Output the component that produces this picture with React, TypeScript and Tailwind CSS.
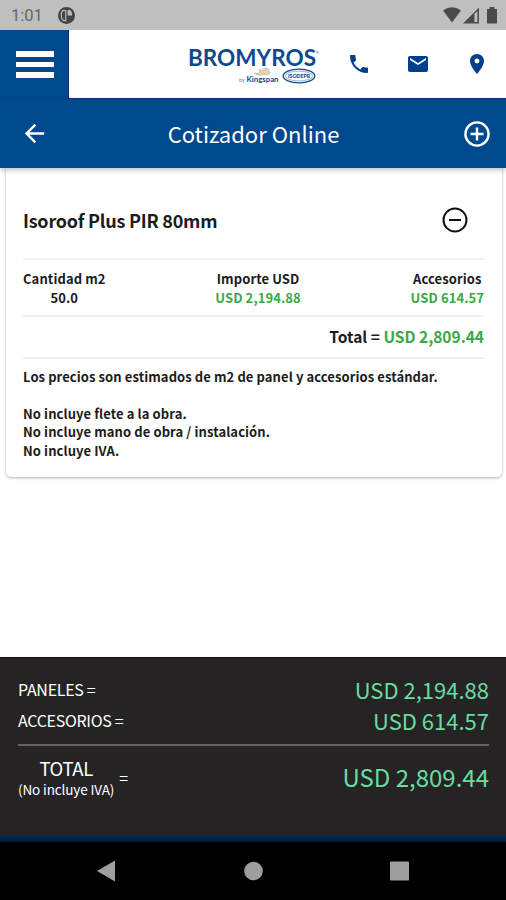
import { MdArrowBack, MdEmail, MdLocationOn, MdPhone } from "react-icons/md";

export default function App() {
  return (
    <div className="flex h-[900px] w-[506px] flex-col overflow-hidden bg-white font-['Noto_Sans_CJK_SC','Noto_Sans',sans-serif] text-black">
      <StatusBar />
      <Header />
      <TitleBar />
      <main className="flex-1 pl-[6px] pr-[4px]">
        <QuoteCard />
      </main>
      <Totals />
      <NavBar />
    </div>
  );
}

function StatusBar() {
  return (
    <div className="flex h-[30px] shrink-0 items-center bg-[#bfbfbf] pl-[11px] pr-[9px]">
      <span className="pt-[2px] font-[Roboto,sans-serif] text-[16.5px] leading-[28px] text-[#666]">1:01</span>
      <svg className="ml-[15px]" width="17" height="17" viewBox="0 0 17 17">
        <circle cx="8.5" cy="8.5" r="8.5" fill="#444" />
        <path d="M4.6 3.6H7.8V13.6H5.6Q3.2 12 3.2 8.5Q3.2 5.4 4.6 3.6Z" fill="none" stroke="#bfbfbf" strokeWidth="1.1" />
        <path d="M9.6 3H12.4Q13.8 4.6 14 7V8.6H9.6Z" fill="#bfbfbf" />
      </svg>
      <svg className="ml-auto" width="54" height="18" viewBox="0 0 54 18" fill="#4a4a4a">
        <path d="M0 4.6Q9 -2.2 18 4.6L9 16.6Z" />
        <path fillRule="evenodd" d="M20 17.6L36 1.4V17.6ZM31.4 8V16H34.4V5Z" />
        <path d="M44 3H46.6V1H51.4V3H54V17.4H44Z" />
      </svg>
    </div>
  );
}

function Header() {
  return (
    <header className="flex h-[69px] shrink-0 items-stretch">
      <button aria-label="Menú" className="flex w-[68px] flex-col items-center justify-center gap-[5px] bg-[#00498f] pl-[2px]">
        <span className="h-[5.5px] w-[38px] bg-white" />
        <span className="h-[5.5px] w-[38px] bg-white" />
        <span className="h-[5.5px] w-[38px] bg-white" />
      </button>
      <div className="flex flex-1 items-center border-b border-l border-[#0a2f80] pl-[119px] pr-[17px] text-[#003f8c]">
        <Logo />
        <MdPhone size={24} className="ml-[25px]" />
        <MdEmail size={24} className="ml-[35px]" />
        <MdLocationOn size={24} className="ml-auto" />
      </div>
    </header>
  );
}

function Logo() {
  return (
    <svg width="134" height="44" viewBox="0 0 134 44" fill="#0b4a8f">
      <text x="0" y="24" fontFamily="Lato" fontWeight="700" fontSize="22" textLength="128" lengthAdjust="spacingAndGlyphs">
        BROMYROS
      </text>
      <text x="127.5" y="12" fontFamily="Lato" fontSize="4.5">®</text>
      <text x="51" y="39.5" fontFamily="Lato" fontSize="5.5" opacity="0.7">by</text>
      <text x="58.5" y="39.5" fontFamily="Lato" fontWeight="700" fontSize="8" textLength="32" lengthAdjust="spacingAndGlyphs">
        Kingspan
      </text>
      <path
        d="M66 31.500Q71 32.500 72.500 29.500Q70 28.500 71 27.500Q74 29 75 27Q78 25.500 81 27.500Q80 29.500 82.500 31Q79 33.500 75 32.500Q71 34 66 31.500Z"
        fill="#e3d2b4"
        stroke="#d3b98f"
        strokeWidth="0.8"
      />
      <ellipse cx="111" cy="34" rx="15.8" ry="6.8" fill="white" stroke="#0b4a8f" strokeWidth="1.3" />
      <ellipse cx="111" cy="34" rx="13.7" ry="4.9" fill="none" stroke="#0b4a8f" strokeWidth="0.4" />
      <text x="100" y="36" fontFamily="Lato" fontWeight="900" fontSize="5.5" textLength="22" lengthAdjust="spacingAndGlyphs">
        ISODEPR
      </text>
    </svg>
  );
}

function TitleBar() {
  return (
    <div className="relative z-10 flex h-[69px] shrink-0 items-center justify-between bg-[#00498f] pl-[20px] pr-[16px] text-white shadow-[0_2px_5px_rgba(0,0,0,0.25)]">
      <MdArrowBack size={29} />
      <h1 className="-ml-[6px] pb-[2px] text-[22px] leading-[32px]">Cotizador Online</h1>
      <svg width="26" height="26" viewBox="0 0 26 26" fill="none" stroke="currentColor" strokeWidth="2.4">
        <circle cx="13" cy="13" r="11.6" />
        <path d="M13 6.5V19.5M6.5 13H19.5" />
      </svg>
    </div>
  );
}

function QuoteCard() {
  return (
    <section className="h-[309px] rounded-b-[5px] bg-white pl-[17px] pr-[18px] pt-[36px] text-[13px] font-bold leading-[18.5px] tracking-[0.09px] text-[#1c1c1c] shadow-[0_1px_3px_rgba(0,0,0,0.3)]">
      <div className="flex h-[31px] items-center justify-between pr-[16px]">
        <h2 className="text-[18px] leading-[30px] tracking-[-0.24px]">Isoroof Plus PIR 80mm</h2>
        <svg width="26" height="26" viewBox="0 0 26 26" fill="none" stroke="#111" strokeWidth="2">
          <circle cx="13" cy="13" r="11.5" />
          <path d="M7 13H19" />
        </svg>
      </div>
      <div className="mt-[23px] flex h-[59px] justify-between border-y-2 border-[#f0f0f0] pt-[10px] text-center">
        <div>
          <p>Cantidad m2</p>
          <p>50.0</p>
        </div>
        <div>
          <p>Importe USD</p>
          <p className="text-[#3aa945]">USD 2,194.88</p>
        </div>
        <div>
          <p>Accesorios</p>
          <p className="text-[#3aa945]">USD 614.57</p>
        </div>
      </div>
      <p className="h-[42px] border-b-2 border-[#f0f0f0] text-right text-[15.5px] leading-[39px] tracking-normal">
        Total = <span className="text-[#3aa945]">USD 2,809.44</span>
      </p>
      <p className="pt-[9px]">Los precios son estimados de m2 de panel y accesorios estándar.</p>
      <p className="pt-[18px]">No incluye flete a la obra.</p>
      <p>No incluye mano de obra / instalación.</p>
      <p>No incluye IVA.</p>
    </section>
  );
}

function Totals() {
  return (
    <footer className="h-[177px] shrink-0 border-t border-[#111] bg-[#252324] pl-[18px] pr-[17px] pt-[16px] text-white">
      <div className="flex h-[31px] items-center justify-between">
        <span className="text-[16px] leading-[31px] tracking-[-0.3px]">PANELES =</span>
        <span className="text-[22px] leading-[31px] text-[#65dea0]">USD 2,194.88</span>
      </div>
      <div className="flex h-[31px] items-center justify-between">
        <span className="text-[16px] leading-[31px] tracking-[-0.3px]">ACCESORIOS =</span>
        <span className="text-[22px] leading-[31px] text-[#65dea0]">USD 614.57</span>
      </div>
      <div className="mt-[8px] flex h-[63px] items-center justify-between border-t-2 border-[#646263]">
        <div className="flex items-center gap-[5px]">
          <div className="pt-[3px] text-center">
            <p className="text-[18.5px] leading-[22px] tracking-[-0.4px]">TOTAL</p>
            <p className="text-[13.5px] leading-[20px] tracking-[-0.12px]">(No incluye IVA)</p>
          </div>
          <span className="text-[16px] leading-[24px]">=</span>
        </div>
        <span className="text-[24px] leading-[32px] text-[#65dea0]">USD 2,809.44</span>
      </div>
    </footer>
  );
}

function NavBar() {
  return (
    <nav className="flex h-[66px] shrink-0 flex-col bg-black">
      <div className="h-[8px] bg-linear-to-b from-[#1b2733] via-[#002448] to-[#001a38]" />
      <svg width="506" height="58" viewBox="0 0 506 58" fill="#9e9e9e">
        <path d="M97 29L115 18.5V39.5Z" />
        <circle cx="253.5" cy="29" r="9.3" />
        <rect x="390" y="19.5" width="19" height="19" rx="1" />
      </svg>
    </nav>
  );
}
